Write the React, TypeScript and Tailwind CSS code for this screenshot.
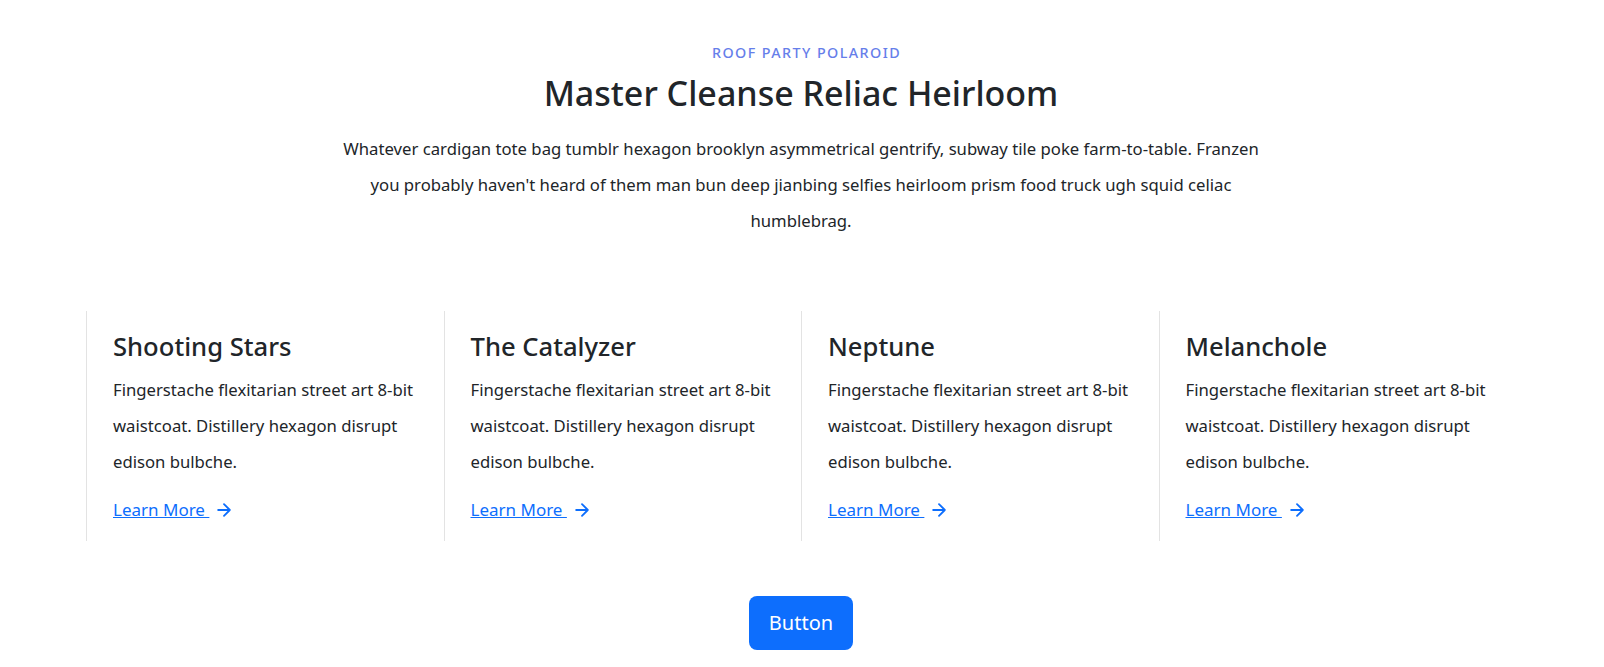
import React from "react";

const cards = ["Shooting Stars", "The Catalyzer", "Neptune", "Melanchole"];

function Arrow() {
  return (
    <svg
      viewBox="0 0 24 24"
      fill="none"
      stroke="currentColor"
      strokeWidth={2.2}
      strokeLinecap="round"
      strokeLinejoin="round"
      className="w-5 h-5 ml-[5px]"
    >
      <path d="M5 12h14M12 5l7 7-7 7" />
    </svg>
  );
}

export default function App() {
  return (
    <div
      className="min-h-[667px] bg-white text-[#212529]"
      style={{ fontFamily: '"Noto Sans", "Open Sans", sans-serif' }}
    >
      <section className="pt-[43px] pb-[17px]">
        <div className="w-[1430px] ml-[86px]">
          <div className="text-center">
            <h2 className="pl-[11px] text-[14.3px] leading-5 font-medium tracking-widest text-[#667eea]">
              ROOF PARTY POLAROID
            </h2>
            <h1 className="mt-[10px] text-[34px] leading-10 font-medium">
              Master Cleanse Reliac Heirloom
            </h1>
            <p className="mt-[18px] w-2/3 mx-auto text-[16.7px] leading-9">
              Whatever cardigan tote bag tumblr hexagon brooklyn asymmetrical gentrify, subway tile poke
              farm-to-table. Franzen
              <br />
              you probably haven't heard of them man bun deep jianbing selfies heirloom prism food truck
              ugh squid celiac
              <br />
              humblebrag.
            </p>
          </div>
          <div className="mt-[72px] grid grid-cols-4">
            {cards.map((t) => (
              <div key={t} className="border-l border-[#e3e3e3] pl-[26px] pr-[24px] pt-5 pb-[19px]">
                <h3 className="text-[25.6px] leading-8 font-medium">{t}</h3>
                <p className="mt-[9px] text-[16.7px] leading-9">
                  Fingerstache flexitarian street art 8-bit
                  <br />
                  waistcoat. Distillery hexagon disrupt
                  <br />
                  edison bulbche.
                </p>
                <a
                  href="#"
                  className="mt-[18px] inline-flex items-center text-[#0d6efd] text-[17px] leading-6"
                >
                  <span className="underline">Learn More&nbsp;</span>
                  <Arrow />
                </a>
              </div>
            ))}
          </div>
          <div className="mt-[55px] flex justify-center">
            <button className="bg-[#0d6efd] text-white text-xl leading-[30px] px-5 py-3 rounded-lg">
              Button
            </button>
          </div>
        </div>
      </section>
    </div>
  );
}
